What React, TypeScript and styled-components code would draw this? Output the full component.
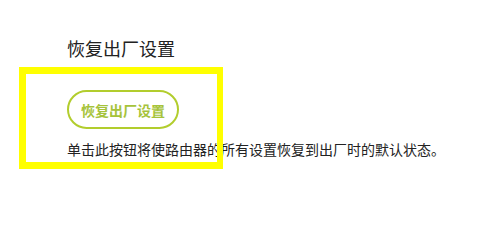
import React from 'react';
import styled, { createGlobalStyle } from 'styled-components';

const GlobalStyle = createGlobalStyle`
  html, body {
    margin: 0;
    padding: 0;
    background: #ffffff;
  }
  body {
    font-family: "Noto Sans CJK SC", "Noto Sans", "Liberation Sans", sans-serif;
    color: #333333;
  }
`;

const Page = styled.div`
  position: relative;
  width: 489px;
  height: 228px;
  overflow: hidden;
  background: #ffffff;
`;

const Section = styled.section`
  display: flex;
  flex-direction: column;
  align-items: flex-start;
  padding: 36px 0 0 67px;
`;

const Title = styled.h2`
  margin: 0;
  font-size: 18px;
  font-weight: 400;
  line-height: 24px;
  color: #222222;
`;

const ResetButton = styled.button`
  margin-top: 30px;
  height: 39px;
  padding: 0 12px;
  border: 2px solid #b2cd2d;
  border-radius: 20px;
  background: #ffffff;
  color: #a6c33a;
  font-family: inherit;
  font-size: 14px;
  font-weight: 700;
  line-height: 20px;
  cursor: pointer;
`;

const Description = styled.p`
  margin: 10px 0 0;
  font-size: 14px;
  line-height: 20px;
  color: #222222;
  white-space: nowrap;
`;

const Highlight = styled.div`
  position: absolute;
  left: 19px;
  top: 67px;
  width: 204px;
  height: 102px;
  box-sizing: border-box;
  border-style: solid;
  border-color: #ffff00;
  border-width: 7px 6px 7px 7px;
  pointer-events: none;
`;

const App = () => {
  return (
    <Page>
      <GlobalStyle />
      <Section>
        <Title>恢复出厂设置</Title>
        <ResetButton>恢复出厂设置</ResetButton>
        <Description>单击此按钮将使路由器的所有设置恢复到出厂时的默认状态。</Description>
      </Section>
      <Highlight />
    </Page>
  );
};

export default App;
